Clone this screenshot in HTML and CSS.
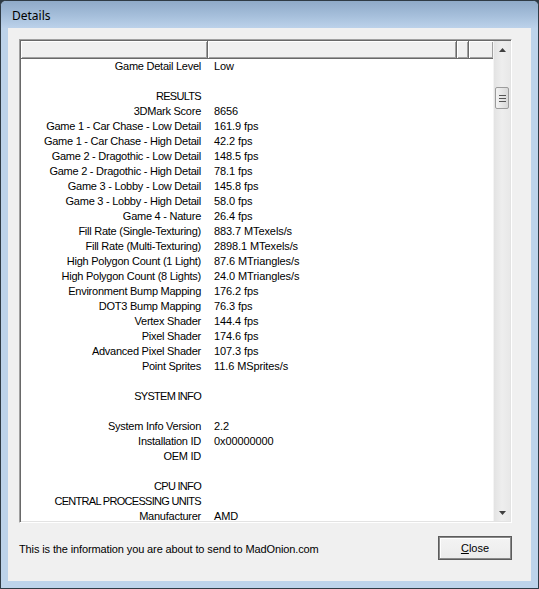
FILE: index.html
```html
<!DOCTYPE html>
<html>
<head>
<meta charset="utf-8">
<link rel="stylesheet" href="styles.css">
</head>
<body>
<div class="window">
  <div class="titlebar"><span class="title">Details</span></div>
  <div class="client">
    <div class="listbox">
      <div class="list-main">
        <div class="header">
          <div class="hcell c1"></div>
          <div class="hcell c2"></div>
          <div class="hcell c3"></div>
          <div class="hcell c4"></div>
        </div>
        <div class="rows">
          <div class="row"><span class="k">Game Detail Level</span><span class="v">Low</span></div>
          <div class="row"><span class="k"></span><span class="v"></span></div>
          <div class="row"><span class="k caps">RESULTS</span><span class="v"></span></div>
          <div class="row"><span class="k">3DMark Score</span><span class="v">8656</span></div>
          <div class="row"><span class="k">Game 1 - Car Chase - Low Detail</span><span class="v">161.9 fps</span></div>
          <div class="row"><span class="k">Game 1 - Car Chase - High Detail</span><span class="v">42.2 fps</span></div>
          <div class="row"><span class="k">Game 2 - Dragothic - Low Detail</span><span class="v">148.5 fps</span></div>
          <div class="row"><span class="k">Game 2 - Dragothic - High Detail</span><span class="v">78.1 fps</span></div>
          <div class="row"><span class="k">Game 3 - Lobby - Low Detail</span><span class="v">145.8 fps</span></div>
          <div class="row"><span class="k">Game 3 - Lobby - High Detail</span><span class="v">58.0 fps</span></div>
          <div class="row"><span class="k">Game 4 - Nature</span><span class="v">26.4 fps</span></div>
          <div class="row"><span class="k">Fill Rate (Single-Texturing)</span><span class="v">883.7 MTexels/s</span></div>
          <div class="row"><span class="k">Fill Rate (Multi-Texturing)</span><span class="v">2898.1 MTexels/s</span></div>
          <div class="row"><span class="k">High Polygon Count (1 Light)</span><span class="v">87.6 MTriangles/s</span></div>
          <div class="row"><span class="k">High Polygon Count (8 Lights)</span><span class="v">24.0 MTriangles/s</span></div>
          <div class="row"><span class="k">Environment Bump Mapping</span><span class="v">176.2 fps</span></div>
          <div class="row"><span class="k">DOT3 Bump Mapping</span><span class="v">76.3 fps</span></div>
          <div class="row"><span class="k">Vertex Shader</span><span class="v">144.4 fps</span></div>
          <div class="row"><span class="k">Pixel Shader</span><span class="v">174.6 fps</span></div>
          <div class="row"><span class="k">Advanced Pixel Shader</span><span class="v">107.3 fps</span></div>
          <div class="row"><span class="k">Point Sprites</span><span class="v">11.6 MSprites/s</span></div>
          <div class="row"><span class="k"></span><span class="v"></span></div>
          <div class="row"><span class="k caps">SYSTEM INFO</span><span class="v"></span></div>
          <div class="row"><span class="k"></span><span class="v"></span></div>
          <div class="row"><span class="k">System Info Version</span><span class="v">2.2</span></div>
          <div class="row"><span class="k">Installation ID</span><span class="v">0x00000000</span></div>
          <div class="row"><span class="k">OEM ID</span><span class="v"></span></div>
          <div class="row"><span class="k"></span><span class="v"></span></div>
          <div class="row"><span class="k caps">CPU INFO</span><span class="v"></span></div>
          <div class="row"><span class="k caps">CENTRAL PROCESSING UNITS</span><span class="v"></span></div>
          <div class="row"><span class="k">Manufacturer</span><span class="v">AMD</span></div>
        </div>
      </div>
      <div class="scrollbar">
        <div class="sb-btn"><svg width="7" height="4" viewBox="0 0 7 4"><path d="M3.5 0 L7 4 L0 4 Z" fill="#404040"/></svg></div>
        <div class="sb-track">
          <div class="sb-gap"></div>
          <div class="sb-thumb"><span class="grip"></span><span class="grip"></span><span class="grip"></span></div>
        </div>
        <div class="sb-btn"><svg width="7" height="4" viewBox="0 0 7 4"><path d="M0 0 L7 0 L3.5 4 Z" fill="#404040"/></svg></div>
      </div>
    </div>
    <div class="footer">
      <span class="note">This is the information you are about to send to MadOnion.com</span>
      <button class="btn"><u>C</u>lose</button>
    </div>
  </div>
</div>
</body>
</html>
```

FILE: styles.css
```css
html, body {
  margin: 0;
  padding: 0;
  background: #2e3a44;
}
.window {
  width: 539px;
  height: 589px;
  box-sizing: border-box;
  border: 1px solid #2f3b45;
  border-radius: 6px 6px 0 0;
  background: #bdd3ea;
  display: flex;
  flex-direction: column;
  overflow: hidden;
}
.titlebar {
  height: 27px;
  flex: none;
  background: linear-gradient(to bottom, #8faac8 0%, #a6bfdb 55%, #bcd2ea 100%);
  display: flex;
  align-items: center;
  padding-left: 11px;
}
.title {
  font-family: "Noto Sans", "Open Sans", sans-serif;
  font-size: 12px;
  color: #000;
  position: relative;
  top: 1px;
}
.client {
  margin: 0 7px 7px 7px;
  height: 553px;
  background: #f0f0f0;
  box-sizing: border-box;
  padding: 11px 19px 0 11px;
  display: flex;
  flex-direction: column;
}
.listbox {
  width: 493px;
  height: 484px;
  box-sizing: border-box;
  border-top: 1px solid #a0a0a0;
  border-left: 1px solid #a0a0a0;
  border-right: 1px solid #ffffff;
  border-bottom: 1px solid #ffffff;
  box-shadow: inset 1px 1px 0 #696969, inset -1px -1px 0 #e3e3e3;
  padding: 1px;
  background: #fff;
  display: flex;
}
.list-main {
  flex: 1;
  overflow: hidden;
  display: flex;
  flex-direction: column;
}
.header {
  display: flex;
  height: 18px;
  flex: none;
}
.hcell {
  box-sizing: border-box;
  height: 18px;
  background: #f0f0f0;
  border-right: 1px solid #696969;
  border-bottom: 1px solid #696969;
  box-shadow: inset 1px 1px 0 #ffffff, inset -1px -1px 0 #a0a0a0;
}
.c1 { width: 187px; }
.c2 { width: 249px; }
.c3 { width: 12px; }
.c4 { flex: 1; border-right: none; }
.rows {
  font-family: "Liberation Sans", Arial, sans-serif;
  font-size: 11px;
  letter-spacing: -0.25px;
  color: #000;
}
.row {
  display: grid;
  grid-template-columns: 187px 1fr;
  height: 15px;
  line-height: 15px;
  white-space: nowrap;
}
.k {
  text-align: right;
  padding-right: 7px;
}
.caps {
  letter-spacing: -0.7px;
}
.v {
  padding-left: 6px;
  letter-spacing: -0.1px;
}
.scrollbar {
  width: 17px;
  flex: none;
  display: flex;
  flex-direction: column;
  background: linear-gradient(to right, #e3e3e3, #eeeeee 50%, #e8e8e8);
  border-left: 1px solid #f4f4f4;
  box-sizing: border-box;
}
.sb-btn {
  height: 17px;
  flex: none;
  display: flex;
  align-items: center;
  justify-content: center;
}
.sb-track {
  flex: 1;
  display: flex;
  flex-direction: column;
  align-items: center;
}
.sb-gap {
  height: 29px;
}
.sb-thumb {
  width: 14px;
  height: 22px;
  box-sizing: border-box;
  border: 1px solid #9c9c9c;
  border-radius: 2px;
  background: linear-gradient(to right, #f3f3f3, #e6e6e6 50%, #d8d8d8);
  display: flex;
  flex-direction: column;
  align-items: center;
  justify-content: center;
  gap: 2px;
}
.grip {
  width: 7px;
  height: 1px;
  background: #555;
}
.footer {
  display: flex;
  justify-content: space-between;
  align-items: center;
  margin-top: 13px;
}
.note {
  font-family: "Liberation Sans", Arial, sans-serif;
  font-size: 11px;
  letter-spacing: -0.12px;
  color: #000;
  position: relative;
  top: 1px;
}
.btn {
  width: 74px;
  height: 24px;
  box-sizing: border-box;
  margin: 0;
  padding: 0;
  border: 1px solid #5c5c5c;
  box-shadow: inset 0 0 0 1px #8a8a8a, inset 2px 2px 0 #ffffff;
  background: linear-gradient(to bottom, #f4f4f4, #ebebeb);
  font-family: "Liberation Sans", Arial, sans-serif;
  font-size: 11px;
  color: #000;
}
```
